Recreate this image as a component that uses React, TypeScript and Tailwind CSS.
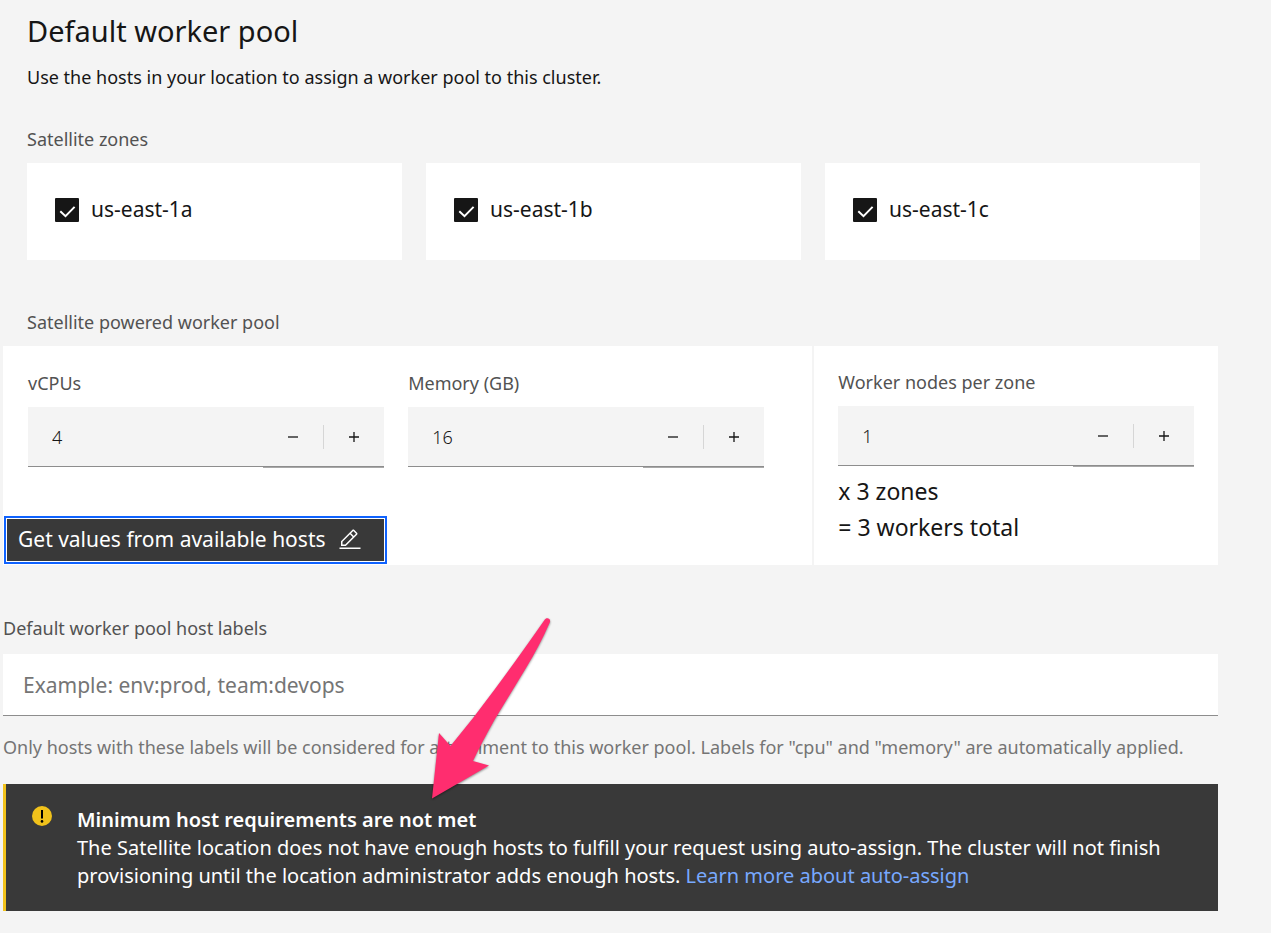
import { useState } from 'react'

const zones = ['us-east-1a', 'us-east-1b', 'us-east-1c']

function ZoneCard({ name }: { name: string }) {
  return (
    <label className="flex h-[97px] cursor-pointer items-center gap-3 bg-white pb-[3px] pl-7 text-[21px] text-[#161616]">
      <span className="grid size-6 shrink-0">
        <input
          type="checkbox"
          defaultChecked
          className="peer col-start-1 row-start-1 size-6 appearance-none rounded-[1px] border-2 border-[#161616] checked:bg-[#161616]"
        />
        <svg
          viewBox="0 0 24 24"
          aria-hidden="true"
          className="pointer-events-none col-start-1 row-start-1 size-6 fill-none stroke-white stroke-2 opacity-0 peer-checked:opacity-100"
        >
          <path d="M5.3 13.2 10.5 18.2 19.6 8.9" />
        </svg>
      </span>
      {name}
    </label>
  )
}

function NumberField({ id, label, initial }: { id: string; label: string; initial: number }) {
  const [value, setValue] = useState(initial)
  return (
    <div className="min-w-0">
      <label htmlFor={id} className="block text-lg leading-6 text-[#525252]">
        {label}
      </label>
      <div className="mt-3 flex h-[60px] items-center border-b border-[#8d8d8d] bg-[#f4f4f4]">
        <input
          id={id}
          type="number"
          value={value}
          onChange={(e) => setValue(Number(e.target.value))}
          className="h-full min-w-0 flex-1 bg-transparent pl-6 text-lg font-light text-[#161616] outline-none [appearance:textfield] [&::-webkit-inner-spin-button]:appearance-none"
        />
        <div className="flex h-full items-center shadow-[0_1px_0_#8d8d8d,0_2px_0_#a8a8a8]">
          <button
            type="button"
            aria-label={`Decrease ${label}`}
            onClick={() => setValue(Math.max(0, value - 1))}
            className="flex h-full w-[60px] items-center justify-center"
          >
            <svg viewBox="0 0 10 10" className="size-2.5 fill-none stroke-[#161616]" strokeWidth="1.3">
              <path d="M0 5H10" />
            </svg>
          </button>
          <span className="h-6 w-px bg-[#d6d6d6]" />
          <button
            type="button"
            aria-label={`Increase ${label}`}
            onClick={() => setValue(value + 1)}
            className="flex h-full w-[60px] items-center justify-center"
          >
            <svg viewBox="0 0 10 10" className="size-2.5 fill-none stroke-[#161616]" strokeWidth="1.3">
              <path d="M0 5H10M5 0V10" />
            </svg>
          </button>
        </div>
      </div>
    </div>
  )
}

export default function App() {
  return (
    <main className="relative min-h-screen bg-[#f4f4f4] pr-[53px] pb-6 pl-[3px] font-['Noto_Sans',sans-serif] text-[#161616]">
      <section className="pr-[18px] pl-6">
        <h1 className="pt-[11px] text-[29px] leading-10">Default worker pool</h1>
        <p className="mt-[14px] text-lg leading-6">
          Use the hosts in your location to assign a worker pool to this cluster.
        </p>
        <h2 className="mt-[38px] text-lg leading-6 text-[#525252]">Satellite zones</h2>
        <div className="mt-3 grid grid-cols-3 gap-6">
          {zones.map((zone) => (
            <ZoneCard key={zone} name={zone} />
          ))}
        </div>
        <h2 className="mt-[50px] text-lg leading-6 text-[#525252]">Satellite powered worker pool</h2>
      </section>

      <section className="mt-3 grid grid-cols-3 gap-0.5">
        <div className="col-span-2 flex flex-col justify-between bg-white pt-[25px]">
          <div className="grid grid-cols-2 gap-6 pr-12 pl-[25px]">
            <NumberField id="vcpus" label="vCPUs" initial={4} />
            <NumberField id="memory" label="Memory (GB)" initial={16} />
          </div>
          <button
            type="button"
            className="mb-px ml-px flex h-12 w-[383px] items-center gap-3 border-2 border-[#0f62fe] bg-[#393939] pl-3 text-[21px] whitespace-nowrap text-white ring-1 ring-white ring-inset"
          >
            Get values from available hosts
            <svg viewBox="0 0 32 32" className="size-6 shrink-0 fill-white" aria-hidden="true">
              <path d="M2 26H30V28H2zM25.4 9c.8-.8.8-2 0-2.8l-3.6-3.6c-.8-.8-2-.8-2.8 0l-15 15V24h6.4L25.4 9zM20.4 4L24 7.6l-3 3L17.4 7 20.4 4zM6 22v-3.6l10-10 3.6 3.6-10 10H6z" />
            </svg>
          </button>
        </div>
        <div className="bg-white px-6 pt-6 pb-5">
          <NumberField id="nodes" label="Worker nodes per zone" initial={1} />
          <p className="mt-[7px] text-[23px] leading-9">x 3 zones</p>
          <p className="text-[23px] leading-9">= 3 workers total</p>
        </div>
      </section>

      <section className="mt-[51px]">
        <label htmlFor="labels" className="block text-lg leading-6 text-[#525252]">
          Default worker pool host labels
        </label>
        <input
          id="labels"
          type="text"
          placeholder="Example: env:prod, team:devops"
          className="mt-[14px] block h-[62px] w-full border-b border-[#8d8d8d] bg-white px-5 text-[21px] outline-none placeholder:text-[#757575]"
        />
        <p className="mt-[19px] text-lg leading-6 text-[#757575]">
          Only hosts with these labels will be considered for attachment to this worker pool. Labels for "cpu" and
          "memory" are automatically applied.
        </p>
      </section>

      <section
        role="status"
        className="mt-[25px] flex border-l-3 border-[#f1c21b] bg-[#393939] pt-[22px] pr-6 pb-[21px] pl-[26px] text-white"
      >
        <svg viewBox="0 0 20 20" className="size-5 shrink-0" aria-hidden="true">
          <circle cx="10" cy="10" r="10" fill="#f1c21b" />
          <path d="M9 4h2v8.5H9z" />
          <circle cx="10" cy="15.4" r="1.3" />
        </svg>
        <div className="ml-[25px] text-xl leading-7">
          <h3 className="font-semibold">Minimum host requirements are not met</h3>
          <p>
            The Satellite location does not have enough hosts to fulfill your request using auto-assign. The cluster
            will not finish provisioning until the location administrator adds enough hosts.{' '}
            <a href="#auto-assign" className="text-[#78a9ff]">
              Learn more about auto-assign
            </a>
          </p>
        </div>
      </section>

      <svg
        viewBox="0 0 130 190"
        aria-hidden="true"
        className="pointer-events-none absolute top-[614px] left-[426px] h-[190px] w-[130px] drop-shadow-[0_1px_1px_rgba(0,0,0,0.45)]"
      >
        <path
          fill="#ff2d6f"
          d="M6 184.500L13 119L24.500 132Q47 105 69 75Q92 44 118.500 6C120 3 125 4 124 8Q114 31 100 54L69 105Q56 128 47 147L63 151.500Z"
        />
      </svg>
    </main>
  )
}
